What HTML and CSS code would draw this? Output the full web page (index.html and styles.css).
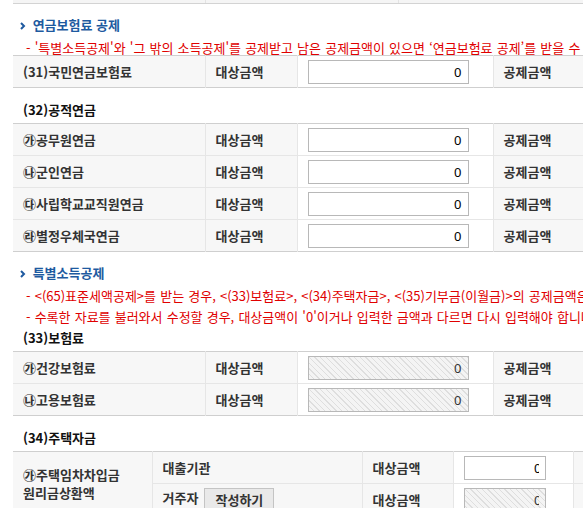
FILE: index.html
```
<!DOCTYPE html>
<html lang="ko">
<head>
    <meta charset="UTF-8">
    <meta name="viewport" content="width=device-width, initial-scale=1.0">
    <title>소득공제 입력</title>
    <link rel="stylesheet" href="styles.css">
</head>
<body>
<div class="wrap">
    <!-- 위쪽 표의 끝부분 -->
    <div class="prev">
        <div class="prev-cell"></div>
        <div class="prev-cell"></div>
        <div class="prev-cell last"></div>
    </div>

    <h3 class="sec-title">
        <svg class="chev" width="6" height="8" viewBox="0 0 6 8"><polyline points="1,1 4,4 1,7" fill="none" stroke="#1e5aa0" stroke-width="2"/></svg>
        연금보험료 공제
    </h3>
    <ul class="notes">
        <li>- '특별소득공제'와 '그 밖의 소득공제'를 공제받고 남은 공제금액이 있으면 ‘연금보험료 공제’를 받을 수 있습니다.</li>
    </ul>
    <table class="form">
        <colgroup><col class="c1"><col class="c2"><col class="c3"><col class="c4"><col></colgroup>
        <tr>
            <th>(31)국민연금보험료</th>
            <th>대상금액</th>
            <td><input class="num" type="text" value="0"></td>
            <th>공제금액</th>
            <td><input class="num" type="text" value="0"></td>
        </tr>
    </table>

    <h4 class="sub-title">(32)공적연금</h4>
    <table class="form">
        <colgroup><col class="c1"><col class="c2"><col class="c3"><col class="c4"><col></colgroup>
        <tr>
            <th>㉮공무원연금</th>
            <th>대상금액</th>
            <td><input class="num" type="text" value="0"></td>
            <th>공제금액</th>
            <td><input class="num" type="text" value="0"></td>
        </tr>
        <tr>
            <th>㉯군인연금</th>
            <th>대상금액</th>
            <td><input class="num" type="text" value="0"></td>
            <th>공제금액</th>
            <td><input class="num" type="text" value="0"></td>
        </tr>
        <tr>
            <th>㉰사립학교교직원연금</th>
            <th>대상금액</th>
            <td><input class="num" type="text" value="0"></td>
            <th>공제금액</th>
            <td><input class="num" type="text" value="0"></td>
        </tr>
        <tr>
            <th>㉱별정우체국연금</th>
            <th>대상금액</th>
            <td><input class="num" type="text" value="0"></td>
            <th>공제금액</th>
            <td><input class="num" type="text" value="0"></td>
        </tr>
    </table>

    <h3 class="sec-title">
        <svg class="chev" width="6" height="8" viewBox="0 0 6 8"><polyline points="1,1 4,4 1,7" fill="none" stroke="#1e5aa0" stroke-width="2"/></svg>
        특별소득공제
    </h3>
    <ul class="notes">
        <li>- &lt;(65)표준세액공제&gt;를 받는 경우, &lt;(33)보험료&gt;, &lt;(34)주택자금&gt;, &lt;(35)기부금(이월금)&gt;의 공제금액은 입력하지 않습니다.</li>
        <li>- 수록한 자료를 불러와서 수정할 경우, 대상금액이 '0'이거나 입력한 금액과 다르면 다시 입력해야 합니다.</li>
    </ul>

    <h4 class="sub-title">(33)보험료</h4>
    <table class="form">
        <colgroup><col class="c1"><col class="c2"><col class="c3"><col class="c4"><col></colgroup>
        <tr>
            <th>㉮건강보험료</th>
            <th>대상금액</th>
            <td><input class="num" type="text" value="0" disabled></td>
            <th>공제금액</th>
            <td><input class="num" type="text" value="0" disabled></td>
        </tr>
        <tr>
            <th>㉯고용보험료</th>
            <th>대상금액</th>
            <td><input class="num" type="text" value="0" disabled></td>
            <th>공제금액</th>
            <td><input class="num" type="text" value="0" disabled></td>
        </tr>
    </table>

    <h4 class="sub-title">(34)주택자금</h4>
    <table class="form house">
        <colgroup><col class="h1"><col class="h2"><col class="h3"><col class="h4"><col></colgroup>
        <tr>
            <th rowspan="2" class="two-line">㉮주택임차차입금<br>원리금상환액</th>
            <th>대출기관</th>
            <th>대상금액</th>
            <td><div class="num short"><span class="clip"><span>0</span></span></div></td>
            <th>공제금액</th>
        </tr>
        <tr>
            <th><span class="who">거주자</span><button class="btn" type="button">작성하기</button></th>
            <th>대상금액</th>
            <td><div class="num short off"><span class="clip"><span>0</span></span></div></td>
            <th>공제금액</th>
        </tr>
    </table>
</div>
</body>
</html>
```

FILE: styles.css
```
html, body {
    margin: 0;
    padding: 0;
    overflow: hidden;
}

body {
    font-family: "Noto Sans CJK KR", "Noto Sans", sans-serif;
    font-size: 13px;
    color: #333;
    background: #fff;
}

.wrap {
    padding-left: 13px;
    width: 800px;
}

/* 위쪽 표 끝 */
.prev {
    display: flex;
    height: 3px;
    border-bottom: 1px solid #d3d3d3;
}
.prev-cell {
    width: 192px;
    background: #f5f5f5;
    border-right: 1px solid #e3e3e3;
}
.prev-cell.last {
    flex: 1;
    border-right: 0;
}

.sec-title {
    margin: 11px 0 0;
    padding-left: 7px;
    line-height: 20px;
    font-size: 13px;
    font-weight: bold;
    color: #1e5aa0;
}
.chev {
    margin-right: 3px;
    vertical-align: 0;
}

.notes {
    list-style: none;
    margin: 6px 0 0;
    padding-left: 13px;
    color: #e00000;
    white-space: nowrap;
    word-spacing: 0.5px;
}
.notes li {
    line-height: 14px;
}
.notes li + li {
    margin-top: 7px;
}

.sub-title {
    margin: 12px 0 3px;
    padding-left: 10px;
    line-height: 20px;
    font-size: 13px;
    font-weight: bold;
    color: #111;
}
.notes + .sub-title {
    margin-top: 4px;
}

.form {
    border-collapse: collapse;
    table-layout: fixed;
    width: 780px;
    border-top: 1px solid #cfcfcf;
    border-bottom: 1px solid #cfcfcf;
}
.form col.c1 { width: 192px; }
.form col.c2 { width: 92px; }
.form col.c3 { width: 196px; }
.form col.c4 { width: 92px; }
.form col.h1 { width: 139px; }
.form col.h2 { width: 210px; }
.form col.h3 { width: 91px; }
.form col.h4 { width: 120px; }

.form th,
.form td {
    height: 31px;
    padding: 0 0 0 10px;
    border: 1px solid #e6e6e6;
    border-top: 0;
    text-align: left;
    white-space: nowrap;
}
.form tr:last-child th,
.form tr:last-child td {
    border-bottom: 0;
}
.form th {
    background: #f7f7f7;
    font-weight: bold;
    color: #333;
}
.form tr > :first-child {
    border-left: 0;
}
.form td {
    background: #fff;
}

.two-line {
    line-height: 18px;
}

.num {
    display: block;
    box-sizing: border-box;
    width: 161px;
    height: 24px;
    margin: 0;
    padding: 0 6px 0 0;
    border: 1px solid #b8b8b8;
    background: #fff;
    font-family: "Noto Sans", "DejaVu Sans", sans-serif;
    font-size: 13px;
    color: #000;
    text-align: right;
    line-height: 22px;
    outline: none;
}
.num:disabled,
.num.off {
    background: repeating-linear-gradient(45deg, #f4f4f4 0, #f4f4f4 3px, #dedede 3px, #dedede 4px);
    color: #333;
}

.num.short {
    width: 82px;
    padding-right: 6px;
}
.clip {
    display: block;
    overflow: hidden;
}
.clip span {
    display: block;
    margin-right: -3px;
    text-align: right;
}

.who {
    margin-right: 6px;
}
.btn {
    height: 24px;
    width: 70px;
    padding: 0;
    border: 1px solid #c4c4c4;
    background: #e9e9e9;
    font-family: inherit;
    font-size: 13px;
    font-weight: bold;
    color: #333;
    vertical-align: middle;
}
```
